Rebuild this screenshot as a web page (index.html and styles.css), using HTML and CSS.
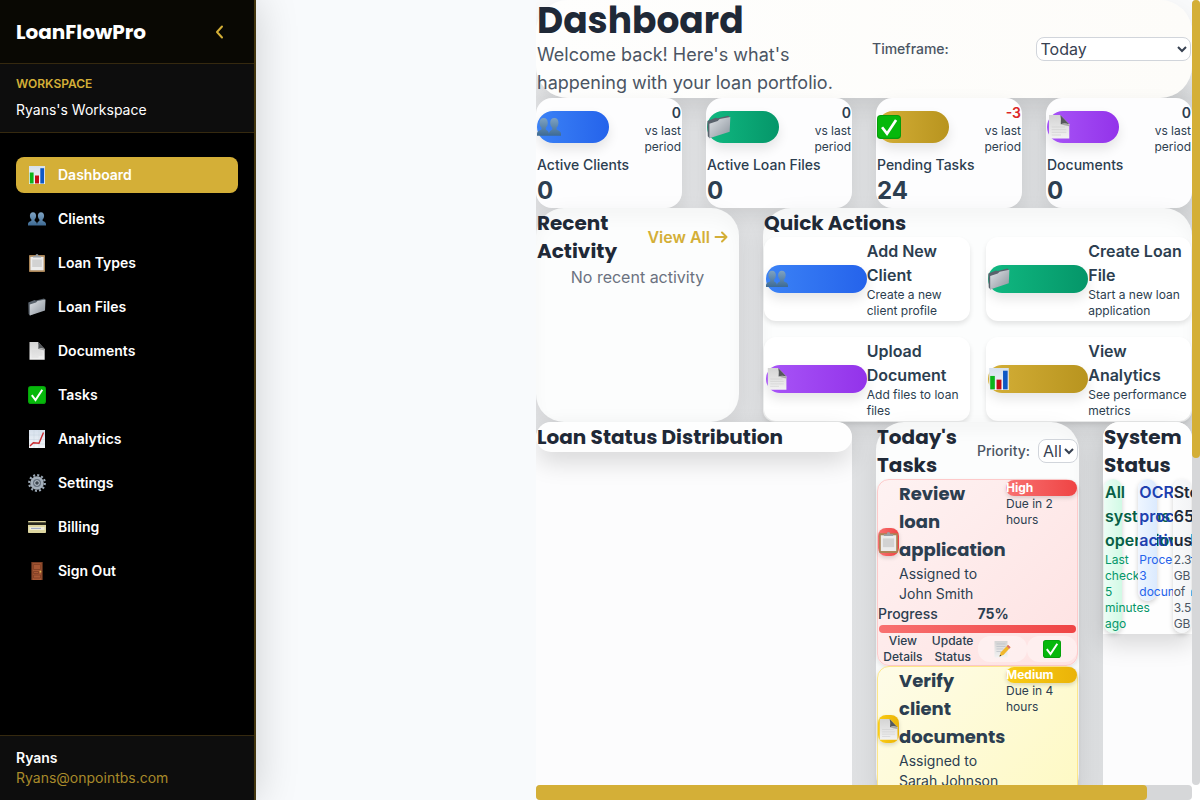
FILE: index.html
```html
<!DOCTYPE html>
<html lang="en">
<head>
<meta charset="utf-8">
<title>LoanFlowPro</title>
<link rel="stylesheet" href="styles.css">
</head>
<body>
<svg class="sprite" aria-hidden="true">
  <defs>
    <linearGradient id="person" x2="0" y2="1"><stop offset="0" stop-color="#7fa3c2"/><stop offset="1" stop-color="#3d6a94"/></linearGradient>
    <linearGradient id="paper" x2="0" y2="1"><stop offset="0" stop-color="#d4d4d4"/><stop offset="1" stop-color="#f2f2f2"/></linearGradient>
    <linearGradient id="steel" x2="1" y2="1"><stop offset="0" stop-color="#dfe3e7"/><stop offset="1" stop-color="#8b939c"/></linearGradient>
    <linearGradient id="sheet" x2="0" y2="1"><stop offset="0" stop-color="#d6e0ec"/><stop offset="1" stop-color="#f4f7fa"/></linearGradient>
    <symbol id="i-people" viewBox="0 0 18 18"><g fill="url(#person)"><path d="M5 2.2c2 0 3.1 1.5 3.1 3.6 0 1.500-.6 3-1.500 3.800v1.200c.6.8 2.400 1 2.400 3.600v1.200H0v-1.400c0-2.400 2.500-2.600 3.400-3.400V9.600C2.500 8.800 1.900 7.300 1.900 5.800 1.900 3.700 3 2.200 5 2.200z"/><path d="M13 2.200c2 0 3.100 1.500 3.100 3.600 0 1.500-.6 3-1.500 3.800v1.200c.9.800 3.400 1 3.400 3.400v1.400H9v-1.200c0-2.600 1.800-2.800 2.400-3.600V9.600c-.9-.8-1.500-2.300-1.500-3.800 0-2.100 1.100-3.600 3.100-3.600z"/></g></symbol>
    <symbol id="i-clip" viewBox="0 0 18 18"><rect x="1" y="1" width="16" height="17" rx=".8" fill="#a98456"/><rect x="2.400" y="2.800" width="13.200" height="13.500" fill="#ececec"/><path d="M4.200 5.500h9.600v7.500H4.200z" fill="#d2d2d2"/><path d="M5 3.500V2h2.500Q7.500 0 9 0t1.500 2H13v1.500z" fill="#9aa0a6"/></symbol>
    <symbol id="i-folder" viewBox="0 0 18 18"><path d="M.3 4.500 6.500 2l1.500.5 8-2 .8.8v10L2 17.500.6 16z" fill="#59626c"/><path d="M1.800 6.500 8 4.500 9.500 3 17.500 1.500 17 12.500 1.800 17.500z" fill="url(#steel)"/></symbol>
    <symbol id="i-doc" viewBox="0 0 18 18"><path d="M1.500 0H10l6.700 7v10.700H1.500z" fill="url(#paper)"/><path d="M10 0l6.700 7Q13 5.600 10.300 7 10.800 3 10 0z" fill="#55585b"/><path d="M10.300 7q3-1.200 6.400.3V8.500q-4-.7-6.400-1.500z" fill="#a7a7a7"/><path d="M3.500 9h10M3.500 11h11M3.500 13h11M3.500 15h7" stroke="#cecece" stroke-width=".5"/></symbol>
    <symbol id="i-check" viewBox="0 0 18 18"><rect width="18" height="18" rx="2.800" fill="#079b0b"/><rect x=".7" y=".7" width="16.600" height="16.300" rx="2.300" fill="#06b80b"/><path d="M3.800 9.200 7.500 14 14.300 3.800" fill="none" stroke="#fff" stroke-width="2"/></symbol>
    <symbol id="i-bars" viewBox="0 0 18 18"><path d="M1 0h16v18H1z" fill="url(#sheet)"/><path d="M1.800 6.500h3.800V17.500H1.800z" fill="#0bb51a"/><path d="M7 9.500h4v8H7z" fill="#c40d16"/><path d="M12.300 2.200h3.800v15.300h-3.800z" fill="#0e58c4"/></symbol>
    <symbol id="i-trend" viewBox="0 0 18 18"><path d="M1 0h16v18H1z" fill="url(#sheet)"/><path d="M1 5h16M1 9.500h16M1 14h16M6 0v18M11 0v18" stroke="#c3cfdb" stroke-width=".4"/><path d="M2 16l3.300-3.300L11 13.300 15.500 2.500" fill="none" stroke="#c92a2f" stroke-width="1.400"/></symbol>
    <symbol id="i-gear" viewBox="0 0 18 18"><circle cx="9" cy="9" r="7.800" fill="none" stroke="#9aa7b4" stroke-width="2.200" stroke-dasharray="2.040 2.040"/><circle cx="9" cy="9" r="5.400" fill="#66717d" stroke="#a4afba" stroke-width="2.800"/><circle cx="9" cy="9" r="2.300" fill="#39424b" stroke="#c2cbd4"/></symbol>
    <symbol id="i-card" viewBox="0 0 18 18"><rect y="3" width="18" height="12" rx=".8" fill="#ddd6a0"/><path d="M0 4.300h18v2.700H0z" fill="#26261c"/><path d="M1.500 9h15v3h-15z" fill="#efedd8"/><path d="M3 10.400h10" stroke="#8d9bc4" stroke-width=".9"/></symbol>
    <symbol id="i-door" viewBox="0 0 18 18"><path d="M3.300 0h11.400v18H3.300z" fill="#753b22"/><path d="M4.500 1.200h9V18h-9z" fill="#a75835"/><path d="M5.500 2.500h7v5h-7zM5.500 9.500h5v2h-5zM5.500 13h7v3h-7z" fill="none" stroke="#7d3e25" stroke-width=".8"/><circle cx="12.400" cy="9.700" r=".9" fill="#e3bd53"/></symbol>
    <symbol id="i-memo" viewBox="0 0 18 18"><path d="M1.500 1h13v16.500h-13z" fill="url(#paper)"/><path d="M3.500 4h9M3.500 6.500h9M3.500 9h7M3.500 11.500h5" stroke="#b9bfc6" stroke-width=".7"/><path d="M15 5 17.500 7.300l-6.800 7.500-4.200 1.700 1.300-4.200z" fill="#f1b72b"/><path d="M15 5 17.500 7.300 16.300 8.700 13.800 6.300z" fill="#d96c75"/><path d="M6.500 16.500l.6-1.800 1.200 1.100z" fill="#333"/></symbol>
  </defs>
</svg>
<div class="app">
  <aside class="sidebar">
    <div class="brand">
      <span class="logo">LoanFlowPro</span>
      <button class="collapse" aria-label="Collapse sidebar"><svg viewBox="0 0 20 20"><path d="M12 4.500 7 10l5 5.500" fill="none" stroke="currentColor" stroke-width="2" stroke-linecap="round" stroke-linejoin="round"/></svg></button>
    </div>
    <div class="workspace">
      <div class="workspace-label">WORKSPACE</div>
      <div class="workspace-name">Ryans's Workspace</div>
    </div>
    <nav class="nav">
      <a href="#" class="active"><svg><use href="#i-bars"/></svg>Dashboard</a>
      <a href="#"><svg><use href="#i-people"/></svg>Clients</a>
      <a href="#"><svg><use href="#i-clip"/></svg>Loan Types</a>
      <a href="#"><svg><use href="#i-folder"/></svg>Loan Files</a>
      <a href="#"><svg><use href="#i-doc"/></svg>Documents</a>
      <a href="#"><svg><use href="#i-check"/></svg>Tasks</a>
      <a href="#"><svg><use href="#i-trend"/></svg>Analytics</a>
      <a href="#"><svg><use href="#i-gear"/></svg>Settings</a>
      <a href="#"><svg><use href="#i-card"/></svg>Billing</a>
      <a href="#"><svg><use href="#i-door"/></svg>Sign Out</a>
    </nav>
    <div class="user">
      <div class="user-name">Ryans</div>
      <div class="user-mail">Ryans@onpointbs.com</div>
    </div>
  </aside>
  <main class="main">
    <div class="view">
      <header class="hero">
        <div>
          <h1>Dashboard</h1>
          <p>Welcome back! Here's what's happening with your loan portfolio.</p>
        </div>
        <div class="timeframe">
          <label for="timeframe">Timeframe:</label>
          <select id="timeframe"><option>Today</option></select>
        </div>
      </header>

      <section class="stats">
        <article class="stat">
          <div class="stat-top"><span class="pill blue"><svg><use href="#i-people"/></svg></span><div class="change"><b>0</b>vs last period</div></div>
          <div class="stat-label">Active Clients</div><div class="stat-value">0</div>
        </article>
        <article class="stat">
          <div class="stat-top"><span class="pill green"><svg><use href="#i-folder"/></svg></span><div class="change"><b>0</b>vs last period</div></div>
          <div class="stat-label">Active Loan Files</div><div class="stat-value">0</div>
        </article>
        <article class="stat">
          <div class="stat-top"><span class="pill gold"><svg><use href="#i-check"/></svg></span><div class="change"><b class="down">-3</b>vs last period</div></div>
          <div class="stat-label">Pending Tasks</div><div class="stat-value">24</div>
        </article>
        <article class="stat">
          <div class="stat-top"><span class="pill purple"><svg><use href="#i-doc"/></svg></span><div class="change"><b>0</b>vs last period</div></div>
          <div class="stat-label">Documents</div><div class="stat-value">0</div>
        </article>
      </section>

      <section class="middle">
        <article class="card">
          <div class="card-head"><h2>Recent Activity</h2><a href="#" class="view-all">View All <svg viewBox="0 0 14 14"><path d="M1.500 7h11M8 2.500 12.500 7 8 11.500" fill="none" stroke="currentColor" stroke-width="2" stroke-linecap="round" stroke-linejoin="round"/></svg></a></div>
          <p class="empty">No recent activity</p>
        </article>
        <article class="card quick">
          <h2>Quick Actions</h2>
          <div class="actions">
            <button class="action"><span class="pill blue"><svg><use href="#i-people"/></svg></span><span><strong>Add New Client</strong><small>Create a new client profile</small></span></button>
            <button class="action"><span class="pill green"><svg><use href="#i-folder"/></svg></span><span><strong>Create Loan File</strong><small>Start a new loan application</small></span></button>
            <button class="action"><span class="pill purple"><svg><use href="#i-doc"/></svg></span><span><strong>Upload Document</strong><small>Add files to loan files</small></span></button>
            <button class="action"><span class="pill gold"><svg><use href="#i-bars"/></svg></span><span><strong>View Analytics</strong><small>See performance metrics</small></span></button>
          </div>
        </article>
      </section>

      <section class="bottom">
        <div class="column"><article class="panel"><h2>Loan Status Distribution</h2></article></div>
        <article class="card tasks">
          <div class="card-head">
            <h2>Today's Tasks</h2>
            <div class="priority"><label for="priority">Priority:</label><select id="priority"><option>All</option></select></div>
          </div>
          <div class="task high">
            <div class="task-main">
              <span class="task-icon"><svg><use href="#i-clip"/></svg></span>
              <div><h3>Review loan application</h3><p>Assigned to John Smith</p></div>
              <div class="due"><span class="badge">High</span>Due in 2 hours</div>
            </div>
            <div class="progress-row"><span>Progress</span><b>75%</b></div>
            <div class="bar"></div>
            <div class="task-buttons"><button>View Details</button><button>Update Status</button><button class="soft" aria-label="Edit"><svg><use href="#i-memo"/></svg></button><button class="soft" aria-label="Complete"><svg><use href="#i-check"/></svg></button></div>
          </div>
          <div class="task medium">
            <div class="task-main">
              <span class="task-icon"><svg><use href="#i-doc"/></svg></span>
              <div><h3>Verify client documents</h3><p>Assigned to Sarah Johnson</p></div>
              <div class="due"><span class="badge">Medium</span>Due in 4 hours</div>
            </div>
            <div class="bar"></div>
          </div>
        </article>
        <div class="column">
          <article class="panel system">
            <h2>System Status</h2>
            <div class="statuses">
              <div class="status ok"><strong>All systems operational</strong><small>Last checked: 5 minutes ago</small></div>
              <div class="status ocr"><strong>OCR processing active</strong><small>Processing 3 documents</small></div>
              <div class="status disk"><strong>Storage 65% used</strong><small>2.3 GB of 3.5 GB</small></div>
            </div>
          </article>
        </div>
      </section>
    </div>
    <div class="track-y"><div class="thumb-y"></div></div>
    <div class="track-x"><div class="thumb-x"></div></div>
  </main>
</div>
</body>
</html>
```
FILE: styles.css
```css
* { box-sizing: border-box; margin: 0; padding: 0; }
body { font: 16px/24px Inter, "Liberation Sans", sans-serif; color: #2c3e50; background: #f8fafc; -webkit-font-smoothing: antialiased; }
button, select { font: inherit; color: inherit; border: 0; background: none; }
a { text-decoration: none; color: inherit; }
svg { display: block; flex: none; }
.sprite { position: absolute; width: 0; height: 0; }
h1, h2, h3, .logo { font-family: Poppins, "Open Sans", Inter, sans-serif; font-weight: 700; }
h2 { font-size: 20px; line-height: 28px; color: #1f2937; }

.app { display: flex; height: 100vh; overflow: hidden; }

.sidebar { width: 256px; flex: none; display: flex; flex-direction: column; background: #000; color: #fff; border-right: 2px solid #43360f; font-size: 14px; line-height: 20px; box-shadow: 0 0 40px rgba(0, 0, 0, .18); z-index: 1; }
.brand { height: 64px; display: flex; align-items: center; justify-content: space-between; padding: 0 24px 0 16px; background: #090803; border-bottom: 1px solid #35290f; }
.logo { font-size: 20px; }
.collapse { color: #d4af37; }
.collapse svg { width: 20px; height: 20px; }
.workspace { padding: 12px 16px; background: #0d0d0d; border-bottom: 1px solid #35290f; }
.workspace-label { font-size: 12px; line-height: 16px; font-weight: 600; margin-bottom: 8px; color: #d4af37; }
.nav { flex: 1; display: flex; flex-direction: column; gap: 8px; padding: 24px 16px; }
.nav a { display: flex; align-items: center; gap: 12px; padding: 8px 12px; border-radius: 8px; font-weight: 600; }
.nav svg { width: 18px; height: 18px; }
.nav .active { background: #d4af37; }
.user { padding: 12px 16px; background: #0d0d0d; border-top: 1px solid #35290f; }
.user-name { font-weight: 600; }
.user-mail { color: #a88a2a; }

.main { flex: 1; min-width: 0; margin-left: 280px; display: grid; grid-template: minmax(0, 1fr) 15px / minmax(0, 1fr) 8px; background: #fff; }
.view { overflow: hidden; display: flex; flex-direction: column; background: linear-gradient(#f9fafb 60px, rgba(249, 250, 251, 0) 98px), linear-gradient(90deg, #e3e4e6, #dadcde); }
.track-y { background: #d6d7d9; border-radius: 4px; }
.thumb-y { height: 58.300%; background: #d4af37; border-radius: 4px; }
.track-x { background: #d6d7d9; border-radius: 4px; }
.thumb-x { width: 93.100%; height: 100%; background: #d4af37; border-radius: 4px; }

.hero { display: grid; grid-template-columns: 1fr 1fr; gap: 16px; align-items: center; padding: 1px; border-radius: 32px; background: linear-gradient(90deg, #fefefd, #fdfcf9); box-shadow: 0 12px 24px rgba(0, 0, 0, .1); }
.hero h1 { font-size: 36px; line-height: 40px; color: #1f2937; }
.hero p { font-size: 18px; line-height: 28px; color: #4b5563; }
.timeframe { display: grid; grid-template-columns: 1fr 1fr; gap: 8px; align-items: center; }
label { font-size: 14px; line-height: 20px; font-weight: 500; color: #4b5563; }
select { height: 24px; border: 1px solid #d1d5db; border-radius: 8px; background: #fff; color: #374151; }

.stats { display: grid; grid-template-columns: repeat(4, minmax(0, 1fr)); gap: 24px; }
.stat { padding: 1px; border-radius: 16px; background: #fdfdfe; box-shadow: 0 8px 20px rgba(0, 0, 0, .09); }
.stat-top { display: flex; align-items: center; justify-content: space-between; }
.pill { display: flex; align-items: center; border-radius: 16px; box-shadow: 0 6px 12px rgba(0, 0, 0, .1); }
.stat .pill { width: 72px; height: 32px; }
.stat .pill svg { width: 24px; height: 24px; }
.blue { background: linear-gradient(90deg, #3b82f6, #2563eb); }
.green { background: linear-gradient(90deg, #10b981, #059669); }
.gold { background: linear-gradient(90deg, #d4af37, #b8941f); }
.purple { background: linear-gradient(90deg, #a855f7, #9333ea); }
.change { width: 40px; text-align: right; font-size: 12px; line-height: 16px; }
.change b { display: block; font-size: 14px; line-height: 20px; padding-top: 4px; font-weight: 600; }
.change .down { color: #dc2626; }
.stat-label { font-size: 14px; line-height: 20px; font-weight: 500; white-space: nowrap; }
.stat-value { font-size: 24px; line-height: 32px; font-weight: 700; }

.card { padding: 1px; border-radius: 28px; background: #fcfdfd; box-shadow: 0 8px 24px rgba(0, 0, 0, .08), inset 0 10px 16px rgba(0, 0, 0, .03); }
.quick { border-radius: 28px 28px 12px 12px; }
.card-head { display: flex; align-items: center; justify-content: space-between; }
.middle { display: grid; grid-template-columns: minmax(0, 203fr) minmax(0, 429fr); gap: 24px; }
.card-head h2 { width: 84px; }
.view-all { display: flex; align-items: center; gap: 4px; padding-right: 10px; color: #d4af37; font-weight: 600; white-space: nowrap; }
.view-all svg { width: 14px; height: 14px; }
.empty { text-align: center; color: #6b7280; }
.actions { display: grid; grid-template-columns: 1fr 1fr; gap: 16px; }
.action { display: grid; grid-template-columns: 1fr 1fr; align-items: center; padding: 2px; text-align: left; border-radius: 12px; background: #fff; box-shadow: 0 3px 5px rgba(0, 0, 0, .1); }
.action .pill { height: 28px; }
.action .pill svg { width: 22px; height: 22px; }
.action strong { display: block; font-weight: 600; }
.action small { display: block; font-size: 12px; line-height: 16px; }

.bottom { flex: 1; min-height: 0; display: grid; grid-template-columns: minmax(0, 316fr) minmax(0, 203fr) minmax(0, 89fr); gap: 24px; }
.column { background: #fcfcfd; border-radius: 16px 16px 0 0; }
.panel { padding: 1px; border-radius: 16px; background: #fefefe; box-shadow: 0 10px 24px rgba(0, 0, 0, .15); }
.system { border-bottom-right-radius: 0; border-bottom-left-radius: 0; }
.priority { display: flex; align-items: center; gap: 8px; }
.priority select { width: 40px; }
.task { border: 1px solid; border-radius: 12px; box-shadow: 0 2px 4px rgba(0, 0, 0, .1); }
.high { background: linear-gradient(135deg, #fef2f2, #fee2e2); border-color: #fecaca; --tone: linear-gradient(90deg, #f87171, #ef4444); }
.medium { background: linear-gradient(135deg, #fefce8, #fef9c3); border-color: #fde68a; --tone: linear-gradient(90deg, #facc15, #eab308); }
.task-main { display: grid; grid-template-columns: 21px 107px minmax(0, 1fr); }
.task-icon { align-self: center; height: 28px; display: flex; align-items: center; border-radius: 8px; background: var(--tone); box-shadow: 0 2px 4px rgba(0, 0, 0, .15); }
.task-icon svg { width: 21px; height: 21px; }
.task h3 { font-size: 18px; line-height: 28px; }
.task p { font-size: 14px; line-height: 20px; }
.task-main p { width: 100px; }
.due { font-size: 12px; line-height: 16px; }
.badge { display: block; border-radius: 8px; background: var(--tone); color: #fff; font-weight: 700; box-shadow: 0 2px 4px rgba(0, 0, 0, .15); }
.progress-row { display: grid; grid-template-columns: 1fr 1fr; font-size: 14px; line-height: 20px; font-weight: 500; }
.progress-row b { font-weight: 700; }
.bar { height: 8px; margin: 1px 1px 0; border-radius: 4px; background: var(--tone); }
.task-buttons { display: grid; grid-template-columns: repeat(4, minmax(0, 1fr)); }
.task-buttons button { display: flex; justify-content: center; align-items: center; font-size: 12px; line-height: 16px; font-weight: 500; border-radius: 12px; }
.task-buttons .soft { height: 26px; align-self: center; background: rgba(255, 255, 255, .4); }
.task-buttons svg { width: 18px; height: 18px; }

.statuses { display: grid; grid-template-columns: repeat(3, minmax(0, 1fr)); gap: 16px; align-items: start; }
.status { position: relative; padding: 1px 0 1px 1px; border-radius: 10px; box-shadow: 0 2px 5px rgba(0, 0, 0, .18); }
.status strong { display: block; font-weight: 600; }
.status small { display: block; font-size: 12px; line-height: 16px; }
.ok { background: linear-gradient(90deg, #ecfdf5, #d1fae5); color: #065f46; }
.ok small { color: #059669; }
.ocr { background: linear-gradient(90deg, #eff6ff, #dbeafe); color: #1e40af; }
.ocr small { color: #2563eb; }
.disk { background: linear-gradient(90deg, #f9fafb, #f3f4f6); color: #1f2937; }
.disk small { color: #4b5563; }
```
